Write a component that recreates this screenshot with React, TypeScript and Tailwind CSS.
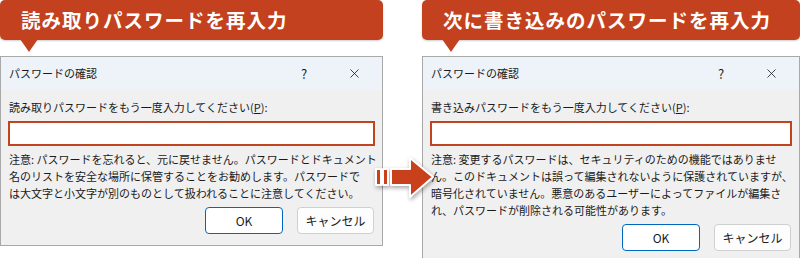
import { X } from 'lucide-react';

const FONT = { fontFamily: '"Noto Sans CJK JP", "Noto Sans", sans-serif' };

interface DialogProps {
  heading: string;
  label: string;
  lines: string[];
  tailLeft: string;
}

function Callout({ heading, tailLeft }: { heading: string; tailLeft: string }) {
  return (
    <div className="relative h-[40px] rounded-[5px] bg-[#c3411e] pl-[21px] flex items-center shadow-[0_1px_2px_rgba(0,0,0,0.2)]">
      <span className="text-white font-bold text-[19.5px] tracking-[1px] leading-none">{heading}</span>
      <div
        className={`absolute top-[39px] ${tailLeft} w-0 h-0 border-l-[9px] border-r-[9px] border-t-[13px] border-l-transparent border-r-transparent border-t-[#c3411e]`}
      />
    </div>
  );
}

function PasswordDialog({ heading, label, lines, tailLeft }: DialogProps) {
  return (
    <div className="flex flex-col">
      <Callout heading={heading} tailLeft={tailLeft} />
      <div className="mt-[16px] border border-[#a9a9a9] bg-[#f0f0f0] text-[11px] text-[#1a1a1a]">
        <div className="h-[33px] bg-[#eef3f9] flex items-center pl-[8px]">
          <span className="flex-1">パスワードの確認</span>
          <span className="text-[13px] w-[56px] text-center">?</span>
          <span className="w-[50px] flex justify-center pr-[6px]">
            <X size={15} strokeWidth={1.3} />
          </span>
        </div>
        <div className="px-[7px] pt-[9px] pb-[11px]">
          <div className="leading-[17px] pl-[1px]">
            {label}(<span className="underline">P</span>):
          </div>
          <div className="mt-[5px] h-[25px] border-2 border-[#c0441f] bg-white" />
          <div className="mt-[5px] pl-[1px] leading-[17px] whitespace-nowrap">
            {lines.map((l, i) => (
              <div key={i}>{l}</div>
            ))}
          </div>
          <div className="mt-[5px] flex justify-end gap-[14px] pr-[1px]">
            <button className="w-[78px] h-[27px] rounded-[4px] border border-[#0067c0] bg-white text-[12px]">
              OK
            </button>
            <button className="w-[77px] h-[27px] rounded-[4px] border border-[#d0d0d0] bg-[#fdfdfd] text-[12px]">
              キャンセル
            </button>
          </div>
        </div>
      </div>
    </div>
  );
}

export default function App() {
  return (
    <div className="relative w-[800px] h-[258px] bg-white overflow-hidden" style={FONT}>
      <div className="flex items-start">
        <div className="w-[383px]">
          <PasswordDialog
            heading="読み取りパスワードを再入力"
            label="読み取りパスワードをもう一度入力してください"
            tailLeft="left-[20px]"
            lines={[
              '注意: パスワードを忘れると、元に戻せません。パスワードとドキュメント',
              '名のリストを安全な場所に保管することをお勧めします。パスワードで',
              'は大文字と小文字が別のものとして扱われることに注意してください。',
            ]}
          />
        </div>
        <div className="ml-[39px] w-[378px]">
          <PasswordDialog
            heading="次に書き込みのパスワードを再入力"
            label="書き込みパスワードをもう一度入力してください"
            tailLeft="left-[20px]"
            lines={[
              '注意: 変更するパスワードは、セキュリティのための機能ではありませ',
              'ん。このドキュメントは誤って編集されないように保護されていますが、',
              '暗号化されていません。悪意のあるユーザーによってファイルが編集さ',
              'れ、パスワードが削除される可能性があります。',
            ]}
          />
        </div>
      </div>

      {/* arrow between the two dialogs */}
      <svg
        className="absolute left-[370px] top-[150px] drop-shadow-[1px_2px_2px_rgba(0,0,0,0.35)]"
        width="70"
        height="52"
        viewBox="0 0 70 52"
      >
        <g fill="#c8411c" stroke="#ffffff" strokeWidth="2" strokeLinejoin="round">
          <rect x="6" y="19" width="5" height="16" />
          <rect x="13" y="19" width="5" height="16" />
          <path d="M21 19 H40 V8 L63 27 L40 47 V35 H21 Z" />
        </g>
      </svg>
    </div>
  );
}
